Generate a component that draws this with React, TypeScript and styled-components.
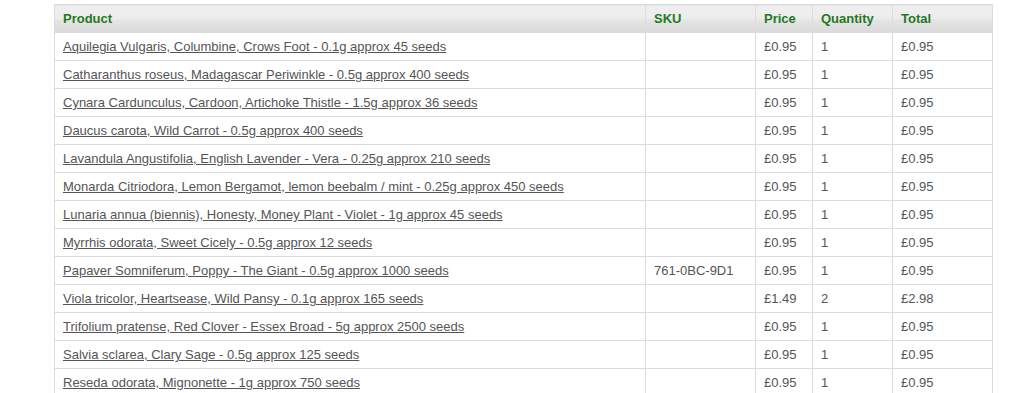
import React from 'react';
import styled, { createGlobalStyle } from 'styled-components';

const GlobalStyle = createGlobalStyle`
  html, body {
    margin: 0;
    padding: 0;
    background: #fff;
  }
  body {
    font-family: "Liberation Sans", Arial, sans-serif;
  }
`;

type Line = {
  name: string;
  sku?: string;
  price: string;
  qty: number;
  total: string;
};

const lines: Line[] = [
  { name: 'Aquilegia Vulgaris, Columbine, Crows Foot - 0.1g approx 45 seeds', price: '£0.95', qty: 1, total: '£0.95' },
  { name: 'Catharanthus roseus, Madagascar Periwinkle - 0.5g approx 400 seeds', price: '£0.95', qty: 1, total: '£0.95' },
  { name: 'Cynara Cardunculus, Cardoon, Artichoke Thistle - 1.5g approx 36 seeds', price: '£0.95', qty: 1, total: '£0.95' },
  { name: 'Daucus carota, Wild Carrot - 0.5g approx 400 seeds', price: '£0.95', qty: 1, total: '£0.95' },
  { name: 'Lavandula Angustifolia, English Lavender - Vera - 0.25g approx 210 seeds', price: '£0.95', qty: 1, total: '£0.95' },
  { name: 'Monarda Citriodora, Lemon Bergamot, lemon beebalm / mint - 0.25g approx 450 seeds', price: '£0.95', qty: 1, total: '£0.95' },
  { name: 'Lunaria annua (biennis), Honesty, Money Plant - Violet - 1g approx 45 seeds', price: '£0.95', qty: 1, total: '£0.95' },
  { name: 'Myrrhis odorata, Sweet Cicely - 0.5g approx 12 seeds', price: '£0.95', qty: 1, total: '£0.95' },
  { name: 'Papaver Somniferum, Poppy - The Giant - 0.5g approx 1000 seeds', sku: '761-0BC-9D1', price: '£0.95', qty: 1, total: '£0.95' },
  { name: 'Viola tricolor, Heartsease, Wild Pansy - 0.1g approx 165 seeds', price: '£1.49', qty: 2, total: '£2.98' },
  { name: 'Trifolium pratense, Red Clover - Essex Broad - 5g approx 2500 seeds', price: '£0.95', qty: 1, total: '£0.95' },
  { name: 'Salvia sclarea, Clary Sage - 0.5g approx 125 seeds', price: '£0.95', qty: 1, total: '£0.95' },
  { name: 'Reseda odorata, Mignonette - 1g approx 750 seeds', price: '£0.95', qty: 1, total: '£0.95' },
];

const columns = [
  { label: 'Product', width: 591 },
  { label: 'SKU', width: 110 },
  { label: 'Price', width: 57 },
  { label: 'Quantity', width: 80 },
  { label: 'Total', width: 100 },
];

export default function App() {
  return (
    <>
      <GlobalStyle />
      <Page>
        <OrderTable>
          <colgroup>
            {columns.map((c) => (
              <col key={c.label} style={{ width: c.width }} />
            ))}
          </colgroup>
          <thead>
            <tr>
              {columns.map((c) => (
                <HeadCell key={c.label}>{c.label}</HeadCell>
              ))}
            </tr>
          </thead>
          <tbody>
            {lines.map((line) => (
              <tr key={line.name}>
                <Cell>
                  <ProductLink href="#">{line.name}</ProductLink>
                </Cell>
                <Cell>{line.sku ?? ''}</Cell>
                <Cell>{line.price}</Cell>
                <Cell>{line.qty}</Cell>
                <Cell>{line.total}</Cell>
              </tr>
            ))}
          </tbody>
        </OrderTable>
      </Page>
    </>
  );
}

const Page = styled.div`
  padding: 4px 0 0 54px;
  height: 393px;
  overflow: hidden;
  box-sizing: border-box;
`;

const OrderTable = styled.table`
  width: 939px;
  table-layout: fixed;
  border-collapse: collapse;
  font-size: 13px;
  color: #555;
`;

const HeadCell = styled.th`
  height: 28px;
  box-sizing: border-box;
  padding: 0 8px;
  text-align: left;
  font-weight: bold;
  color: #1f7a1f;
  border: 1px solid #dcdcdc;
  background: linear-gradient(to bottom, #efefef 0%, #ececec 50%, #e5e5e5 52%, #dadada 100%);
`;

const Cell = styled.td`
  height: 28px;
  box-sizing: border-box;
  padding: 0 8px;
  border: 1px solid #dcdcdc;
  white-space: nowrap;
`;

const ProductLink = styled.a`
  color: #555;
  text-decoration: underline;
`;
